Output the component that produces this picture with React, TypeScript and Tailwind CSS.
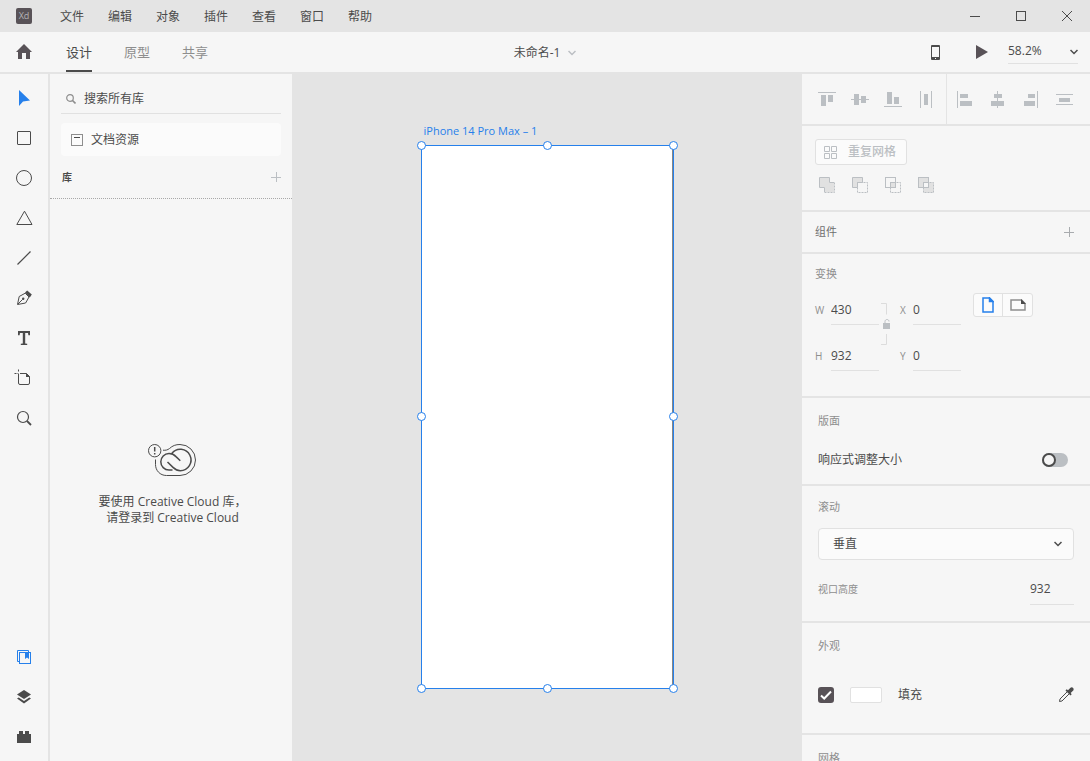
import type { ReactNode } from "react";

const MENU = ["文件", "编辑", "对象", "插件", "查看", "窗口", "帮助"];

const TABS = [
  { label: "设计", active: true },
  { label: "原型", active: false },
  { label: "共享", active: false },
];

const HANDLES = [
  "-left-[5px] -top-[5px]",
  "left-[121px] -top-[5px]",
  "-right-[5px] -top-[5px]",
  "-left-[5px] top-[266px]",
  "-right-[5px] top-[266px]",
  "-left-[5px] -bottom-[5px]",
  "left-[121px] -bottom-[5px]",
  "-right-[5px] -bottom-[5px]",
];

type IconProps = { children: ReactNode; className?: string };

/* 16px outlined icon */
function Icon({ children, className = "size-4" }: IconProps) {
  return (
    <svg viewBox="0 0 16 16" className={className} fill="none" stroke="currentColor" aria-hidden="true">
      {children}
    </svg>
  );
}

const TOOLS = [
  {
    label: "选择",
    active: true,
    icon: <path d="M3 0v16l4-4.6 7-.9z" fill="currentColor" stroke="none" />,
  },
  { label: "矩形", icon: <rect x="1.5" y="1.5" width="13" height="13" rx=".5" /> },
  { label: "椭圆", icon: <circle cx="8" cy="8" r="7.5" /> },
  { label: "多边形", icon: <path d="M8.5 1.2 16 14.5H.8z" /> },
  { label: "直线", icon: <path d="M1.5 14.5l13-13" strokeWidth="1.2" /> },
  {
    label: "钢笔",
    icon: (
      <>
        <path d="M1.5 14.5l1.7-8 6-3.3 3.8 3.8-3.4 6zM2 14l4.6-4.6" />
        <circle cx="7.2" cy="8.8" r="1.2" fill="currentColor" stroke="none" />
        <path d="M9 2.6 11.2.4l4.6 4.2-2 3z" fill="currentColor" stroke="none" />
      </>
    ),
  },
  {
    label: "文本",
    icon: (
      <path
        d="M2 1h12v4.2h-1.6L12 3H9.2v10.4l2 .4V15H4.8v-1.2l2-.4V3H4l-.4 2.2H2z"
        fill="currentColor"
        stroke="none"
      />
    ),
  },
  {
    label: "画板",
    icon: (
      <>
        <path d="M2.5 4v9q0 1.5 1.5 1.5h8q1.5 0 1.5-1.5V6.5l-3-3H4" />
        <path d="M10 3v4h4z" fill="currentColor" stroke="none" />
        <path d="M2.5-.5V1.500M-1.500 3.500h2M1.500 3.500h1" />
      </>
    ),
  },
  {
    label: "缩放",
    icon: (
      <>
        <circle cx="7" cy="7" r="5.5" strokeWidth="1.2" />
        <path d="M11 11l4 4" strokeWidth="1.8" />
      </>
    ),
  },
];

const PANELS = [
  {
    label: "库",
    active: true,
    icon: (
      <>
        <path d="M3 12.5H1.5v-11h11V3" />
        <rect x="3.5" y="3.5" width="11" height="11" />
        <path d="M9 4h4v6l-2-1.6L9 10z" fill="currentColor" stroke="none" />
      </>
    ),
  },
  {
    label: "图层",
    icon: (
      <>
        <path d="M8 1l7 4.5L8 10 1 5.5z" fill="currentColor" stroke="none" />
        <path d="M1 9.5l1.7-1L8 12l5.3-3.5 1.7 1L8 14.5z" fill="currentColor" stroke="none" />
      </>
    ),
  },
  {
    label: "插件",
    icon: <path d="M1 5h2V2h4v3h2V2h4v3h2v9H1z" fill="currentColor" stroke="none" />,
  },
];

/* 18px filled glyphs: bars against a guide line */
const ALIGN_VERTICAL = [
  { label: "顶部对齐", d: "M0 1h18v1H0zM3 4h5v11H3zM10 4h5v7h-5z" },
  { label: "居中对齐（垂直）", d: "M0 8h18v1H0zM3 3h5v11H3zM10 5h5v7h-5z" },
  { label: "底部对齐", d: "M0 15h18v1H0zM3 1h5v12H3zM10 6h5v7h-5z" },
  { label: "水平分布", d: "M3 0h1v17H3zM14 0h1v17h-1zM7 3h4v11H7z" },
];

const ALIGN_HORIZONTAL = [
  { label: "左对齐", d: "M1 0h1v17H1zM4 3h8v4H4zM4 10h12v5H4z" },
  { label: "居中对齐（水平）", d: "M8 0h1v17H8zM5 3h8v4H5zM2 10h13v5H2z" },
  { label: "右对齐", d: "M15 0h1v17h-1zM6 3h7v4H6zM2 10h11v5H2z" },
  { label: "垂直分布", d: "M1 3h17v1H1zM1 13h17v1H1zM4 7h11v4H4z" },
];

const BOOLEANS = [
  {
    label: "添加",
    icon: (
      <>
        <path d="M1 1h9v5h5v9H6v-5H1z" fill="#e1e1e1" stroke="none" />
        <path d="M5.5 15V10.5h-5V.5h10v5H15" />
        <path d="M15.500 5.500v10h-10" strokeDasharray="2 1" />
      </>
    ),
  },
  {
    label: "减去",
    icon: (
      <>
        <path d="M.5.5h10v5h-5v5h-5z" fill="#e1e1e1" />
        <rect x="5.5" y="5.5" width="10" height="10" strokeDasharray="2 1" />
      </>
    ),
  },
  {
    label: "交叉",
    icon: (
      <>
        <rect x="5.5" y="5.5" width="10" height="10" strokeDasharray="2 1" />
        <rect x=".5" y=".5" width="10" height="10" />
        <rect x="5.5" y="5.5" width="5" height="5" fill="#e1e1e1" />
      </>
    ),
  },
  {
    label: "排除重叠",
    icon: (
      <>
        <rect x=".5" y=".5" width="10" height="10" fill="#e1e1e1" />
        <rect x="5.5" y="5.5" width="10" height="10" fill="#e1e1e1" strokeDasharray="2 1" />
        <rect x="5.5" y="5.5" width="5" height="5" fill="#f6f6f6" />
      </>
    ),
  },
];

function Chevron({ className }: { className: string }) {
  return (
    <svg viewBox="0 0 8 6" className={className} fill="none" stroke="currentColor" strokeWidth="1.5" aria-hidden="true">
      <path d="M.5 1 4 4.5 7.5 1" />
    </svg>
  );
}

function Plus() {
  return (
    <svg viewBox="0 0 10 10" className="size-[10px]" stroke="currentColor" aria-hidden="true">
      <path d="M5.5 0v10M0 5.5h10" />
    </svg>
  );
}

function TitleBar() {
  return (
    <header className="flex h-8 items-center bg-[#e4e4e4]">
      <svg viewBox="0 0 16 16" className="ml-4 size-4" aria-hidden="true">
        <rect width="16" height="16" rx="2" fill="#585257" />
        <text x="8" y="11" textAnchor="middle" fontSize="9" fill="#b5b3b5">
          Xd
        </text>
      </svg>
      <nav className="ml-7 flex gap-6 pt-px">
        {MENU.map((item) => (
          <button key={item} type="button">
            {item}
          </button>
        ))}
      </nav>
      <div className="ml-auto flex">
        <button type="button" aria-label="最小化" className="grid h-8 w-[46px] place-items-center">
          <svg viewBox="0 0 10 10" className="size-[10px]" stroke="currentColor">
            <path d="M0 5.5h10" />
          </svg>
        </button>
        <button type="button" aria-label="最大化" className="grid h-8 w-[46px] place-items-center">
          <svg viewBox="0 0 10 10" className="size-[10px]" fill="none" stroke="currentColor">
            <rect x=".5" y=".5" width="9" height="9" />
          </svg>
        </button>
        <button type="button" aria-label="关闭" className="grid h-8 w-[46px] place-items-center">
          <svg viewBox="0 0 10 10" className="size-[10px]" stroke="currentColor">
            <path d="M0 0l10 10M10 0 0 10" />
          </svg>
        </button>
      </div>
    </header>
  );
}

function Toolbar() {
  return (
    <div className="grid h-[42px] grid-cols-[1fr_auto_1fr] border-b-2 border-[#e4e4e4]">
      <div className="flex">
        <button type="button" aria-label="主页" className="grid w-12 place-items-center">
          <Icon>
            <path d="M8 0l8 8h-2v7h-4V9H6v6H2V8H0z" fill="#585257" stroke="none" />
          </Icon>
        </button>
        <nav className="ml-[18px] flex gap-8 text-[13px]">
          {TABS.map((tab) => (
            <button
              key={tab.label}
              type="button"
              className={
                tab.active
                  ? "border-b-2 border-[#4b4b4b] pt-px"
                  : "border-b-2 border-transparent pt-px text-[#8e8e8e]"
              }
            >
              {tab.label}
            </button>
          ))}
        </nav>
      </div>
      <button type="button" className="flex items-center gap-2 pt-px">
        未命名-1
        <Chevron className="h-[6px] w-2 text-[#bbbfc3]" />
      </button>
      <div className="flex items-center justify-end pr-3">
        <button type="button" aria-label="设备预览">
          <svg viewBox="0 0 9 15" className="h-[15px] w-[9px]" aria-hidden="true">
            <rect width="9" height="15" rx="1" fill="currentColor" />
            <path d="M1 2h7v10H1z" fill="#f6f6f6" />
            <path d="M4 13h1v1H4z" fill="#f6f6f6" />
          </svg>
        </button>
        <button type="button" aria-label="播放" className="ml-9">
          <svg viewBox="0 0 12 14" className="h-[14px] w-3" aria-hidden="true">
            <path d="M0 0l12 7-12 7z" fill="#585257" />
          </svg>
        </button>
        <label className="relative ml-5 flex items-center">
          <select
            aria-label="缩放比例"
            defaultValue="58.2%"
            className="h-6 w-[70px] appearance-none border-b border-[#e1e1e1] pb-px"
          >
            <option>58.2%</option>
            <option>100%</option>
          </select>
          <Chevron className="pointer-events-none absolute right-0 h-[6px] w-2" />
        </label>
      </div>
    </div>
  );
}

function ToolColumn() {
  return (
    <aside className="flex w-[50px] shrink-0 flex-col justify-between border-r-2 border-[#e4e4e4] py-1">
      <div className="flex flex-col">
        {TOOLS.map((tool) => (
          <button
            key={tool.label}
            type="button"
            aria-label={tool.label}
            className={tool.active ? "grid h-10 place-items-center text-[#2680eb]" : "grid h-10 place-items-center"}
          >
            <Icon className="size-4 overflow-visible">{tool.icon}</Icon>
          </button>
        ))}
      </div>
      <div className="flex flex-col">
        {PANELS.map((panel) => (
          <button
            key={panel.label}
            type="button"
            aria-label={panel.label}
            className={panel.active ? "grid h-10 place-items-center text-[#2680eb]" : "grid h-10 place-items-center"}
          >
            <Icon>{panel.icon}</Icon>
          </button>
        ))}
      </div>
    </aside>
  );
}

function LibraryPanel() {
  return (
    <aside className="flex w-[242px] shrink-0 flex-col">
      <div className="px-[11px] pt-[9px]">
        <label className="flex h-[31px] items-center gap-2 border-b border-[#e1e1e1] pt-px pl-[5px]">
          <svg viewBox="0 0 10 10" className="size-[10px] text-[#8e8e8e]" fill="none" stroke="currentColor" aria-hidden="true">
            <circle cx="4" cy="4" r="3.3" strokeWidth="1.2" />
            <path d="M6.5 6.5l3 3" strokeWidth="1.6" />
          </svg>
          <input
            type="search"
            aria-label="搜索所有库"
            placeholder="搜索所有库"
            className="min-w-0 flex-1 outline-none placeholder:text-[#4b4b4b]"
          />
        </label>
        <button type="button" className="mt-[9px] flex h-[33px] w-full items-center gap-2 rounded bg-[#fbfbfb] pl-[10px]">
          <svg viewBox="0 0 12 12" className="size-3" fill="none" stroke="currentColor" aria-hidden="true">
            <rect x=".5" y=".5" width="11" height="11" stroke="#8e8e8e" />
            <path d="M3 3.5h6" />
          </svg>
          文档资源
        </button>
      </div>
      <div className="flex items-center justify-between border-b border-dotted border-[#a8a8a8] py-3 pr-[11px] pl-3">
        <h2 className="text-[10px] leading-[18px] font-bold">库</h2>
        <button type="button" aria-label="添加库" className="text-[#bbbfc3]">
          <Plus />
        </button>
      </div>
      <div className="flex flex-1 flex-col items-center justify-center pt-2 pl-[3px] text-center">
        <svg viewBox="0 0 50 36" className="h-9 w-[50px]" fill="none" stroke="currentColor" aria-hidden="true">
          <circle cx="6.7" cy="8.7" r="6.2" />
          <path d="M6.7 5v4.500M6.700 11v1.500" strokeWidth="1.5" />
          <path d="M15 8.2c2.5.3 4.7-.2 6.5-1.7C24.5 3.7 27.7 2.5 32 2.5A15.5 15.5 0 0 1 32 33.5H18.5C12 33.5 7.5 28.5 7.5 22.5v-5" />
          <path
            d="M24.5 28H21a8.2 8.2 0 0 1 0-16.4c3 0 5 1 7 3l4.3 4.1M19.5 20l5.5 5.4c2.3 2.2 4.5 3.3 7.3 3.3a10.7 10.7 0 1 0-8.5-17.2"
            strokeWidth="1.5"
          />
        </svg>
        <p className="mt-4">
          要使用 Creative Cloud 库，
          <br />
          请登录到 Creative Cloud
        </p>
      </div>
    </aside>
  );
}

function Canvas() {
  return (
    <main className="flex min-w-0 flex-1 justify-center bg-[#e4e4e4] pt-[49px]">
      <div>
        <p className="pl-[3px] text-[11px] text-[#2680eb]">iPhone 14 Pro Max – 1</p>
        <div className="relative mt-[6px] h-[544px] w-[253px] border border-[#2680eb] bg-white shadow-[inset_-1px_0_0_#868686]">
          {HANDLES.map((place) => (
            <span
              key={place}
              className={`absolute size-[9px] rounded-full border border-[#2680eb] bg-white ${place}`}
            />
          ))}
        </div>
      </div>
    </main>
  );
}

function AlignButton({ label, d }: { label: string; d: string }) {
  return (
    <button type="button" aria-label={label}>
      <svg viewBox="0 0 18 17" className="h-[17px] w-[18px]" fill="currentColor" aria-hidden="true">
        <path d={d} />
      </svg>
    </button>
  );
}

type FieldProps = { label: string; value: string; labelWidth: string };

function Field({ label, value, labelWidth }: FieldProps) {
  return (
    <label className="flex items-center">
      <span className={`${labelWidth} text-[10px] text-[#8e8e8e]`}>{label}</span>
      <input
        type="text"
        defaultValue={value}
        className="h-[30px] w-12 border-b border-[#e1e1e1] outline-none"
      />
    </label>
  );
}

function Inspector() {
  return (
    <aside className="w-72 shrink-0 overflow-hidden">
      <section className="flex border-b-2 border-[#e4e4e4] text-[#bbbfc3]">
        <div className="flex w-[145px] gap-[15px] border-r border-[#e4e4e4] pt-[17px] pb-4 pl-4">
          {ALIGN_VERTICAL.map((item) => (
            <AlignButton key={item.label} {...item} />
          ))}
        </div>
        <div className="flex gap-[15px] pt-[17px] pb-4 pl-[9px]">
          {ALIGN_HORIZONTAL.map((item) => (
            <AlignButton key={item.label} {...item} />
          ))}
        </div>
      </section>

      <section className="border-b-2 border-[#e4e4e4] px-[13px] pt-[13px] pb-[17px] text-[#bbbfc3]">
        <button
          type="button"
          className="flex h-[26px] items-center gap-[11px] rounded-[3px] border border-[#e1e1e1] bg-[#fbfbfb] pr-[10px] pl-2 font-medium"
        >
          <svg viewBox="0 0 13 13" className="size-[13px]" fill="none" stroke="currentColor" aria-hidden="true">
            <path d="M.5.5h5v5h-5zM7.5.5h5v5h-5zM.5 7.5h5v5h-5zM7.5 7.5h5v5h-5z" />
          </svg>
          重复网格
        </button>
        <div className="mt-3 flex gap-[17px] pl-1">
          {BOOLEANS.map((item) => (
            <button key={item.label} type="button" aria-label={item.label}>
              <Icon>{item.icon}</Icon>
            </button>
          ))}
        </div>
      </section>

      <section className="flex items-center justify-between border-b-2 border-[#e4e4e4] py-3 pr-4 pl-[13px]">
        <h2 className="text-[11px] text-[#6e6e6e]">组件</h2>
        <button type="button" aria-label="添加组件" className="text-[#a8abae]">
          <Plus />
        </button>
      </section>

      <section className="border-b-2 border-[#e4e4e4] px-[13px] pt-3 pb-[25px]">
        <h2 className="text-[11px] text-[#8e8e8e]">变换</h2>
        <div className="mt-[11px] flex items-start">
          <div className="flex flex-col gap-4 pt-0.5">
            <Field label="W" value="430" labelWidth="w-4" />
            <Field label="H" value="932" labelWidth="w-4" />
          </div>
          <button type="button" aria-label="锁定长宽比" className="mt-[10px] ml-[2px] text-[#bbbfc3]">
            <svg viewBox="0 0 12 42" className="h-[42px] w-3" fill="none" stroke="currentColor" aria-hidden="true">
              <path d="M0 .5h5.5v11M5.5 31v10.500H0" stroke="#dcdcdc" />
              <path d="M4 21v-2.500c0-1.300 1-2 2-2s2 .7 2 2" />
              <path d="M2 20h7v6H2z" fill="currentColor" stroke="none" />
            </svg>
          </button>
          <div className="ml-[7px] flex flex-col gap-4 pt-0.5">
            <Field label="X" value="0" labelWidth="w-[13px]" />
            <Field label="Y" value="0" labelWidth="w-[13px]" />
          </div>
          <div className="ml-3 flex h-6 rounded-[3px] border border-[#e1e1e1] bg-[#fbfbfb]">
            <button type="button" aria-label="纵向" className="grid w-[29px] place-items-center border-r border-[#e1e1e1] text-[#2680eb]">
              <svg viewBox="0 0 12 16" className="h-4 w-3" fill="none" stroke="currentColor" strokeWidth="1.5" aria-hidden="true">
                <path d="M1 1h6.500L11 4.500V15H1z" />
                <path d="M7.500 1v3.500H11z" fill="currentColor" />
              </svg>
            </button>
            <button type="button" aria-label="横向" className="grid w-[29px] place-items-center text-[#8e8e8e]">
              <svg viewBox="0 0 16 12" className="h-3 w-4" fill="none" stroke="currentColor" strokeWidth="1.5" aria-hidden="true">
                <path d="M1 1h10.500L15 4.500V11H1z" />
                <path d="M11 0v5h5z" fill="#4b4b4b" stroke="none" />
              </svg>
            </button>
          </div>
        </div>
      </section>

      <section className="border-b-2 border-[#e4e4e4] px-4 pt-[15px] pb-4">
        <h2 className="text-[11px] text-[#8e8e8e]">版面</h2>
        <label className="mt-[23px] flex items-center justify-between pr-[6px]">
          响应式调整大小
          <input
            type="checkbox"
            role="switch"
            className="relative h-[14px] w-[26px] appearance-none rounded-full bg-[#bbbfc3] before:absolute before:left-0 before:size-[14px] before:rounded-full before:border-2 before:border-[#4b4b4b] before:bg-[#f6f6f6] checked:before:left-3"
          />
        </label>
      </section>

      <section className="border-b-2 border-[#e4e4e4] px-4 pt-[13px] pb-4">
        <h2 className="text-[11px] text-[#8e8e8e]">滚动</h2>
        <div className="relative mt-[13px] flex items-center">
          <select
            aria-label="滚动"
            defaultValue="垂直"
            className="h-8 w-full appearance-none rounded border border-[#e1e1e1] bg-[#fbfbfb] px-[14px]"
          >
            <option>无</option>
            <option>垂直</option>
          </select>
          <Chevron className="pointer-events-none absolute right-3 h-[6px] w-2" />
        </div>
        <label className="mt-[13px] flex items-center justify-between">
          <span className="text-[10px] text-[#8e8e8e]">视口高度</span>
          <input
            type="text"
            defaultValue="932"
            className="h-8 w-11 border-b border-[#e1e1e1] outline-none"
          />
        </label>
      </section>

      <section className="border-b-2 border-[#e4e4e4] px-4 pt-[15px] pb-[30px]">
        <h2 className="text-[11px] text-[#8e8e8e]">外观</h2>
        <div className="mt-[33px] flex items-center gap-4">
          <span className="relative flex">
            <input
              id="fill"
              type="checkbox"
              defaultChecked
              className="peer size-4 appearance-none rounded-[3px] border-2 border-[#585257] checked:bg-[#585257]"
            />
            <svg
              viewBox="0 0 16 16"
              className="pointer-events-none absolute inset-0 hidden size-4 peer-checked:block"
              fill="none"
              stroke="#fff"
              strokeWidth="2"
              aria-hidden="true"
            >
              <path d="M3 8.500l3.200 3L13 4.500" />
            </svg>
          </span>
          <button
            type="button"
            aria-label="填充颜色"
            className="h-4 w-8 rounded-[2px] border border-[#e1e1e1] bg-white"
          />
          <label htmlFor="fill">填充</label>
          <button type="button" aria-label="吸管" className="ml-auto">
            <Icon>
              <path d="M9.300 4.700 2 12l-.5 2.500L4 14l7.300-7.300" />
              <path
                d="M7.500 3.500l1.200-1.200 1.300 1L12.200 1c.9-.9 2.200-.8 2.900-.1.700.700.800 2-.1 2.900l-2.300 2.200 1 1.300-1.200 1.200z"
                fill="currentColor"
                stroke="none"
              />
            </Icon>
          </button>
        </div>
      </section>

      <section className="px-4 pt-[15px]">
        <h2 className="text-[11px] text-[#8e8e8e]">网格</h2>
      </section>
    </aside>
  );
}

export default function App() {
  return (
    <div className="flex h-screen flex-col overflow-hidden bg-[#f6f6f6] font-['Open_Sans','Noto_Sans_CJK_SC',sans-serif] text-[12px] leading-4 text-[#4b4b4b]">
      <TitleBar />
      <Toolbar />
      <div className="flex min-h-0 flex-1">
        <ToolColumn />
        <LibraryPanel />
        <Canvas />
        <Inspector />
      </div>
    </div>
  );
}
